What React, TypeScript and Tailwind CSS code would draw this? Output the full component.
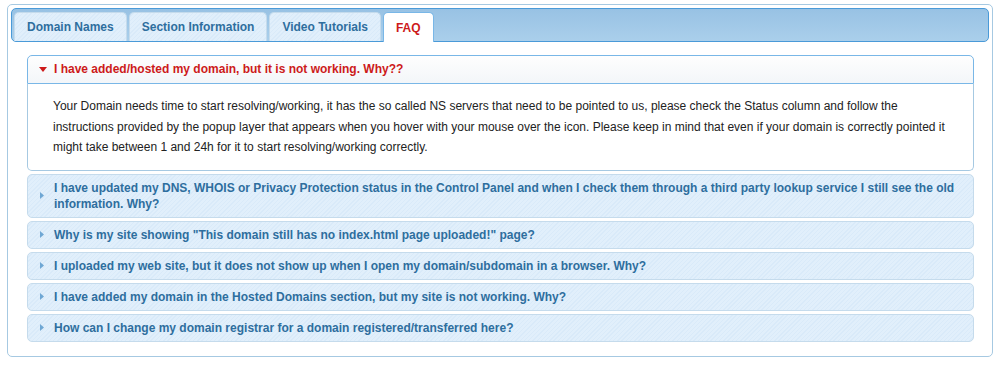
import { useState } from "react";

const tabs = ["Domain Names", "Section Information", "Video Tutorials", "FAQ"];

const faqs = [
  {
    q: "I have added/hosted my domain, but it is not working. Why??",
    a: "Your Domain needs time to start resolving/working, it has the so called NS servers that need to be pointed to us, please check the Status column and follow the instructions provided by the popup layer that appears when you hover with your mouse over the icon. Please keep in mind that even if your domain is correctly pointed it might take between 1 and 24h for it to start resolving/working correctly.",
  },
  {
    q: "I have updated my DNS, WHOIS or Privacy Protection status in the Control Panel and when I check them through a third party lookup service I still see the old information. Why?",
    a: "",
  },
  { q: 'Why is my site showing "This domain still has no index.html page uploaded!" page?', a: "" },
  {
    q: "I uploaded my web site, but it does not show up when I open my domain/subdomain in a browser. Why?",
    a: "",
  },
  { q: "I have added my domain in the Hosted Domains section, but my site is not working. Why?", a: "" },
  { q: "How can I change my domain registrar for a domain registered/transferred here?", a: "" },
];

const hatch =
  "bg-[repeating-linear-gradient(-45deg,#e1effb_0px,#e1effb_2px,#d9eaf9_2px,#d9eaf9_3px)]";

export default function App() {
  const [tab, setTab] = useState(3);
  const [open, setOpen] = useState(0);

  return (
    <div className="w-[1000px] h-[365px] bg-white pt-[4px] pl-[7px] font-['Liberation_Sans',Arial,sans-serif]">
      <div className="w-[986px] h-[353px] rounded-[5px] border border-[#a6c9e2] bg-white p-[3px]">
        <div className="flex h-[34px] items-end gap-[2px] rounded-[5px] border border-[#4a9ad8] bg-gradient-to-b from-[#98c2e4] to-[#aacfeb] pl-[2px]">
          {tabs.map((t, i) => (
            <button
              key={t}
              type="button"
              onClick={() => setTab(i)}
              className={
                i === tab
                  ? "relative -mb-px h-[30px] rounded-t-[5px] border border-b-0 border-[#79b7e7] bg-white px-[12px] text-[12px] font-bold text-[#cd1a1a]"
                  : `h-[29px] rounded-t-[5px] border border-b-0 border-[#c5dbec] ${hatch} px-[12px] text-[12px] font-bold text-[#2e6e9e]`
              }
            >
              {t}
            </button>
          ))}
        </div>

        <div className="flex flex-col gap-[3px] pt-[13px] pl-[16px] pr-[15px]">
          {faqs.map((f, i) =>
            i === open ? (
              <div key={i}>
                <button
                  type="button"
                  onClick={() => setOpen(-1)}
                  className="flex w-full items-center rounded-t-[5px] border border-[#79b7e7] bg-gradient-to-b from-[#fefefe] to-[#f3f6f9] py-[6px] pl-[11px] pr-4 text-left text-[12px] font-bold leading-[15px] text-[#cd1a1a]"
                >
                  <svg width="8" height="5" viewBox="0 0 8 5" className="mr-[7px] shrink-0">
                    <path d="M0 0h8L4 5z" fill="#cd1a1a" />
                  </svg>
                  {f.q}
                </button>
                <div className="rounded-b-[5px] border border-t-0 border-[#a6c9e2] bg-white py-[12px] pl-[25px] pr-[26px] text-[12px] leading-[20.5px] text-[#222]">
                  {f.a}
                </div>
              </div>
            ) : (
              <button
                key={i}
                type="button"
                onClick={() => setOpen(i)}
                className={`flex w-full items-center rounded-[5px] border border-[#c5dbec] ${hatch} py-[5px] pl-[12px] pr-4 text-left text-[12px] font-bold leading-[16px] text-[#2e6e9e]`}
              >
                <svg width="4" height="7" viewBox="0 0 4 7" className="mr-[10px] shrink-0">
                  <path d="M0 0l4 3.5L0 7z" fill="#6fa7d4" />
                </svg>
                <span>{f.q}</span>
              </button>
            )
          )}
        </div>
      </div>
    </div>
  );
}
